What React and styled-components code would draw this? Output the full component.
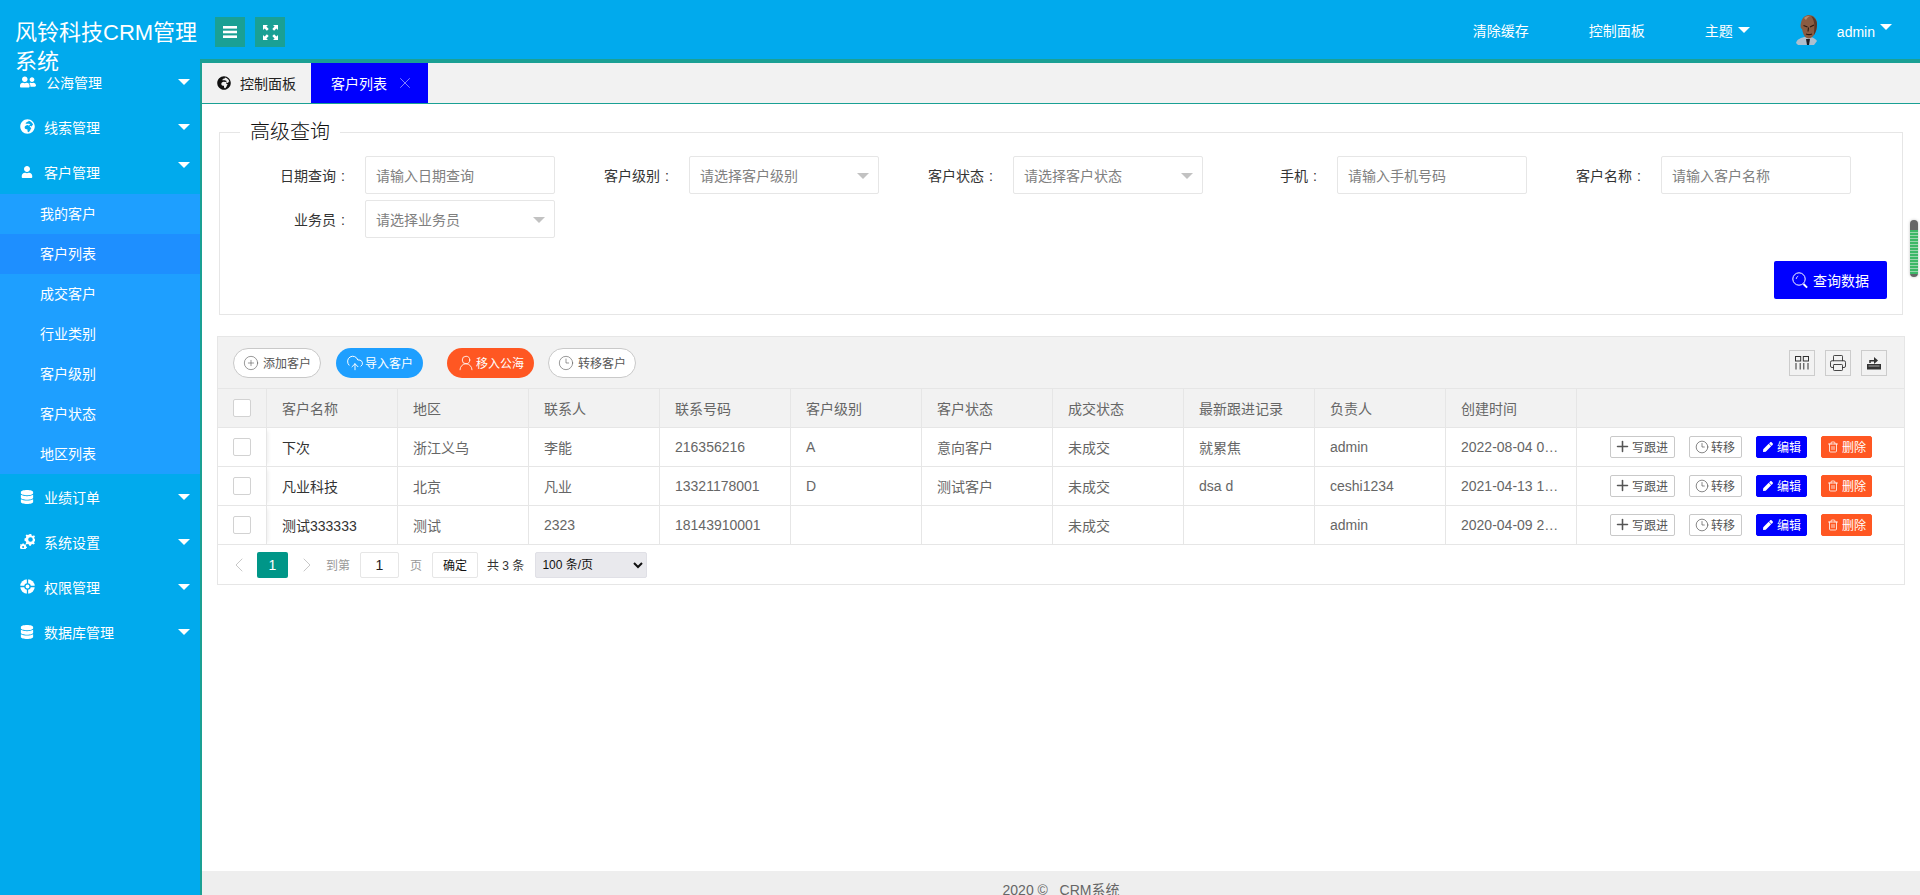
import React from 'react';
import styled, { createGlobalStyle } from 'styled-components';
import { FaUserFriends, FaGlobeAfrica, FaUser, FaDatabase, FaPen } from 'react-icons/fa';
import { CirclePlus, CloudUpload, UserRound, Clock3, Printer, Plus, Trash2, ChevronLeft, ChevronRight, X } from 'lucide-react';

const Global = createGlobalStyle`
  html, body { margin: 0; padding: 0; height: 100%; overflow: hidden; background: #fff; }
  body { font-family: "Liberation Sans", "Noto Sans CJK SC", sans-serif; font-size: 14px; color: #333; }
  * { box-sizing: border-box; }
`;

const Page = styled.div`
  position: relative;
  width: 1920px;
  height: 895px;
  overflow: hidden;
  display: flex;
  flex-direction: column;
`;
const Header = styled.header`
  flex: 0 0 59px;
  display: flex;
  align-items: flex-start;
  background: #01aaed;
  color: #fff;
`;
const Logo = styled.div`
  position: relative;
  z-index: 2;
  flex: 0 0 200px;
  padding: 18px 0 0 15px;
  font-size: 22px;
  line-height: 29px;
  height: 59px;
`;
const HeadBtn = styled.button`
  width: 30px;
  height: 30px;
  margin: 17px 10px 0 ${p => p.$first ? '15px' : '0'};
  padding: 0;
  border: 0;
  background: #1aa094;
  color: #fff;
  display: flex;
  align-items: center;
  justify-content: center;
`;
const HeadNav = styled.nav`
  margin-left: auto;
  height: 59px;
  padding: 1px 28px 0 0;
  display: flex;
  align-items: center;
`;
const NavItem = styled.div`
  display: flex;
  align-items: center;
  height: 30px;
  padding: 0 30px;
  font-size: 14px;
`;
const UserBox = styled.div`
  display: flex;
  align-items: center;
  padding-left: 16px;
  height: 58px;
`;
const UserName = styled.span`
  margin-left: 17px;
  padding-top: 4px;
  font-size: 14px;
`;
const Caret = styled.i`
  display: block;
  flex: none;
  width: 0;
  height: 0;
  margin-left: ${p => p.$ml ?? 5}px;
  border-style: solid;
  border-width: 6px 6px 0 6px;
  border-color: ${p => p.$color || '#fff'} transparent transparent transparent;
  transform: translateY(${p => p.$dy || 0}px);
`;
const MenuCaret = styled(Caret)`
  margin-left: auto;
`;
const Body = styled.div`
  flex: 1;
  display: flex;
  min-height: 0;
`;
const Sidebar = styled.aside`
  flex: 0 0 200px;
  background: #01aaed;
  color: #fff;
`;
const MenuRow = styled.div`
  height: 45px;
  display: flex;
  align-items: center;
  padding: 0 10px 0 20px;
`;
const MenuIcon = styled.span`
  flex: 0 0 ${p => p.$w || 24}px;
  padding-left: ${p => p.$pl || 0}px;
  display: flex;
  align-items: center;
`;
const SubMenu = styled.div`
  background: #1e9fff;
`;
const SubRow = styled.div`
  height: 40px;
  line-height: 40px;
  padding-left: 40px;
  background: ${p => p.$active ? '#1e8fff' : 'transparent'};
`;
const Main = styled.main`
  flex: 1;
  min-width: 0;
  display: flex;
  flex-direction: column;
  border-top: 4px solid #1aa094;
  border-left: 2px solid #1aa094;
`;
const Tabs = styled.div`
  flex: 0 0 41px;
  display: flex;
  background: #f2f2f2;
  border-bottom: 1px solid #1aa094;
`;
const Tab = styled.div`
  height: 40px;
  width: ${p => p.$w}px;
  padding-left: ${p => p.$pl}px;
  display: flex;
  align-items: center;
  font-size: 14px;
  color: ${p => p.$active ? '#fff' : '#222'};
  background: ${p => p.$active ? '#0000ff' : 'transparent'};
`;
const TabIcon = styled.span`
  display: flex;
  margin-right: 9px;
`;
const TabClose = styled.span`
  display: flex;
  margin-left: 9px;
  opacity: .75;
`;
const Content = styled.div`
  flex: 1;
  min-height: 0;
  padding: 0 15px;
`;
const Field = styled.fieldset`
  margin: 13px 2px 0;
  padding: 9px 15px 15px 35px;
  border: 1px solid #e6e6e6;
`;
const Legend = styled.legend`
  margin-left: -15px;
  padding: 0 10px;
  font-size: 20px;
  line-height: 30px;
  font-weight: 300;
  color: #111;
`;
const FormGrid = styled.div`
  display: flex;
  flex-wrap: wrap;
  row-gap: 6px;
`;
const FormItem = styled.div`
  flex: 0 0 324px;
  display: flex;
  align-items: center;
`;
const Label = styled.label`
  flex: 0 0 110px;
  padding-right: 15px;
  display: flex;
  align-items: baseline;
  justify-content: flex-end;
  color: #333;
`;
const Colon = styled.span`
  width: 14px;
  text-align: center;
`;
const Input = styled.div`
  position: relative;
  width: 190px;
  height: 38px;
  padding-left: 10px;
  display: flex;
  align-items: center;
  border: 1px solid #e6e6e6;
  border-radius: 2px;
  color: #808080;
  font-size: 14px;
`;
const SelectCaret = styled(Caret)`
  position: absolute;
  right: 9px;
  top: 16px;
`;
const FormActions = styled.div`
  display: flex;
  justify-content: flex-end;
  margin-top: 23px;
`;
const SearchBtn = styled.button`
  width: 113px;
  height: 38px;
  border: 0;
  border-radius: 2px;
  padding: 0;
  background: #0000ff;
  color: #fff;
  font: inherit;
  display: flex;
  align-items: center;
  justify-content: center;
  gap: 4px;
`;
const TableBox = styled.section`
  margin-top: 21px;
  border: 1px solid #e6e6e6;
`;
const Toolbar = styled.div`
  height: 52px;
  padding: 0 17px 0 15px;
  display: flex;
  align-items: center;
  background: #f2f2f2;
  border-bottom: 1px solid #e6e6e6;
`;
const ToolBtn = styled.button`
  height: 30px;
  padding: 0 9px;
  margin-left: ${p => p.$ml || 0}px;
  display: inline-flex;
  align-items: center;
  gap: ${p => p.$gap ?? 1}px;
  border: 1px solid ${p => p.$bg ? 'transparent' : '#c9c9c9'};
  border-radius: 15px;
  background: ${p => p.$bg || '#fff'};
  color: ${p => p.$bg ? '#fff' : '#555'};
  font: inherit;
  font-size: 12px;
`;
const ToolRight = styled.div`
  margin-left: auto;
  display: flex;
  gap: 10px;
`;
const SquareTool = styled.div`
  width: 26px;
  height: 26px;
  display: flex;
  align-items: center;
  justify-content: center;
  border: 1px solid #ccc;
  color: #333;
`;
const Grid = styled.table`
  width: 100%;
  table-layout: fixed;
  border-collapse: separate;
  border-spacing: 0;
`;
const Col = styled.col`
  width: ${p => p.$w ? `${p.$w}px` : 'auto'};
`;
const Th = styled.th`
  height: 39px;
  padding: 0 15px;
  text-align: left;
  font-weight: 400;
  font-size: 14px;
  color: #666;
  background: #f2f2f2;
  border-right: 1px solid #e6e6e6;
  border-bottom: 1px solid #e6e6e6;
  white-space: nowrap;
  overflow: hidden;
  &:last-child { border-right: 0; }
`;
const Td = styled.td`
  height: 39px;
  padding: 0 15px;
  font-size: 14px;
  color: ${p => p.$dark ? '#333' : '#666'};
  border-right: 1px solid #e6e6e6;
  border-bottom: 1px solid #e6e6e6;
  white-space: nowrap;
  overflow: hidden;
  text-overflow: ellipsis;
  &:last-child { border-right: 0; text-align: center; padding: 0; }
`;
const CheckCell = styled.div`
  display: flex;
  align-items: center;
  height: 100%;
`;
const CheckTh = styled(Th)`
  padding: 0 0 0 15px;
  box-shadow: 4px 0 4px -3px rgba(0, 0, 0, .08);
`;
const CheckTd = styled(Td)`
  padding: 0 0 0 15px;
  box-shadow: 4px 0 4px -3px rgba(0, 0, 0, .08);
`;
const Check = styled.span`
  display: block;
  width: 18px;
  height: 18px;
  background: #fff;
  border: 1px solid #d2d2d2;
  border-radius: 2px;
`;
const Ops = styled.div`
  display: inline-flex;
  align-items: center;
  gap: 14px;
  padding-left: 1px;
`;
const OpBtn = styled.button`
  height: 22px;
  padding: 0 ${p => p.$bg ? 5 : 6}px;
  display: inline-flex;
  align-items: center;
  gap: 3px;
  border: 1px solid ${p => p.$bg || '#c9c9c9'};
  border-radius: 2px;
  background: ${p => p.$bg || '#fff'};
  color: ${p => p.$bg ? '#fff' : '#555'};
  font: inherit;
  font-size: 12px;
`;
const OpIcon = styled.span`
  flex: 0 0 12px;
  width: 12px;
  min-width: 0;
  display: flex;
  align-items: center;
  justify-content: center;
  svg { flex: none; }
`;
const Pager = styled.div`
  height: 39px;
  display: flex;
  align-items: center;
  padding-left: 10px;
  font-size: 12px;
  color: #999;
`;
const PageArrow = styled.span`
  flex: 0 0 ${p => p.$w}px;
  min-width: 0;
  display: flex;
  justify-content: center;
  color: #c8c8c8;
  svg { flex: none; }
`;
const PageNum = styled.span`
  width: 31px;
  height: 26px;
  margin-left: 7px;
  display: flex;
  align-items: center;
  justify-content: center;
  background: #009688;
  color: #fff;
  border-radius: 2px;
  font-size: 14px;
`;
const PageInput = styled.span`
  width: 39px;
  height: 26px;
  margin-left: 10px;
  display: flex;
  align-items: center;
  justify-content: center;
  border: 1px solid #e6e6e6;
  border-radius: 2px;
  color: #222;
  font-size: 14px;
`;
const PageText = styled.span`
  margin-left: ${p => p.$ml || 0}px;
  color: ${p => p.$color || '#999'};
`;
const PageOk = styled.button`
  width: 46px;
  height: 26px;
  margin-left: 10px;
  padding: 0;
  background: #fff;
  border: 1px solid #e6e6e6;
  border-radius: 2px;
  font: inherit;
  color: #111;
`;
const PageSelect = styled.select`
  width: 112px;
  height: 26px;
  margin-left: 11px;
  padding: 0 2px;
  border: 1px solid #e0e0e6;
  border-radius: 2px;
  background-color: #e9e9ed;
  color: #111;
  font-family: inherit;
  font-size: 12px;
`;
const Footer = styled.footer`
  flex: 0 0 24px;
  overflow: hidden;
  background: #eee;
  color: #666;
  text-align: center;
  font-size: 14px;
  line-height: 38px;
  white-space: pre;
`;
const ScrollThumb = styled.div`
  position: absolute;
  left: 1910px;
  top: 220px;
  width: 8px;
  height: 57px;
  border-radius: 4px;
  background: repeating-linear-gradient(#3cb868 0 2px, #9ad4ad 2px 3px) 0 10px / 100% 44px no-repeat, #666;
  box-shadow: 0 0 3px rgba(0, 0, 0, .25);
`;

const Hamburger = () => (
  <svg width="14" height="12" viewBox="0 0 14 12" fill="#fff">
    <rect x="0" y="0" width="14" height="2.6" /><rect x="0" y="4.7" width="14" height="2.6" /><rect x="0" y="9.4" width="14" height="2.6" />
  </svg>
);
const FullScreen = () => (
  <svg width="15" height="15" viewBox="0 0 15 15" fill="#fff">
    <path d="M0 0h5L3.4 1.6l2.3 2.3-1.8 1.8-2.3-2.3L0 5zM15 0v5l-1.6-1.6-2.3 2.3-1.8-1.8 2.3-2.3L10 0zM0 15v-5l1.6 1.6 2.3-2.3 1.8 1.8-2.3 2.3L5 15zM15 15h-5l1.6-1.6-2.3-2.3 1.8-1.8 2.3 2.3L15 10z" />
  </svg>
);
const Avatar = () => (
  <svg width="24" height="30" viewBox="0 0 24 30">
    <path d="M0 28c1-4 5-5 8-6h7c3 1 5 2 6 4l-3 4H2z" fill="#aebfce" />
    <path d="M10 24h4l-1 6h-2z" fill="#1d1d24" />
    <path d="M5 8C6 2 10 0 13 0c5 0 8 4 8 9 0 4-1 8-3 11-2 3-5 4-7 3-3-1-4-5-5-9-1 0-2-3-1-6z" fill="#8a5c42" />
    <path d="M15 1c3 1 6 4 6 8 0 4-1 8-3 11 0-6 2-13-3-19z" fill="#5a3827" />
    <path d="M8 3c2-2 4-2 6-2-2 1-3 2-4 4z" fill="#b58c70" />
    <path d="M7.5 10.5l4 1.5M18 10l-4 2M10 19c2 .8 4 .8 6 0M12.5 12.5l-.5 4" stroke="#2a1710" strokeWidth="1.1" fill="none" />
  </svg>
);
const BallIcon = () => (
  <svg width="15" height="15" viewBox="0 0 15 15">
    <circle cx="7.5" cy="7.5" r="7.3" fill="#fff" />
    <circle cx="7.5" cy="7.5" r="2.6" fill="none" stroke="#01aaed" strokeWidth="1.3" />
    <path d="M7.5 0v5M7.5 10v5M0 7.5h5M10 7.5h5" stroke="#01aaed" strokeWidth="1.3" />
  </svg>
);
const GearsIcon = () => (
  <svg width="15" height="15" viewBox="0 0 15 15" fill="#fff">
    <path fillRule="evenodd" d="M9.7 0h1.6l.3 1.4 1.2.6 1.2-.7 1 1.2-.8 1.1.4 1.3 1.4.4v1.5l-1.4.4-.5 1.2.7 1.2-1.1 1-1.2-.7-1.2.5-.4 1.3H9.3l-.3-1.3-1.2-.5-1.2.7-1-1 .7-1.2-.6-1.2-1.2-.4V4.4l1.3-.4.5-1.3-.7-1.1 1.1-1.2 1.2.7 1.2-.6z M10.5 3.2a2.3 2.3 0 1 0 0 4.6 2.3 2.3 0 0 0 0-4.6z" />
    <path fillRule="evenodd" d="M2.5 9.5h1.3l.2.8.7.3.7-.4.8.8-.4.7.3.7.8.3v1.2l-.8.2-.3.7.4.7-.8.8-.7-.4-.7.3-.2.7H2.5l-.2-.7-.7-.3-.7.4-.8-.8.4-.7L.2 14-.5 13.7v-1.2l.7-.2.3-.8-.4-.7.8-.8.7.4.7-.3z M3.1 12a1 1 0 1 0 0 2 1 1 0 0 0 0-2z" />
  </svg>
);
const ColsIcon = () => (
  <svg width="14" height="14" viewBox="0 0 14 14" fill="none" stroke="#333" strokeWidth="1">
    <rect x=".5" y=".5" width="5.2" height="4.5" /><rect x="8.3" y=".5" width="5.2" height="4.5" />
    <path d="M1 7v6.5M5.2 7v6.5M8.8 7v6.5M13 7v6.5" />
  </svg>
);
const ExportIcon = () => (
  <svg width="14" height="14" viewBox="0 0 14 14">
    <path d="M0 8h14v5.5H0z" fill="#333" />
    <path d="M3 7V4.8h4.5" fill="none" stroke="#333" strokeWidth="1.5" />
    <path d="M7 1l4 3.5L7 8z" fill="#333" />
    <path d="M1.5 10h11" stroke="#fff" strokeWidth=".6" />
  </svg>
);
const SearchIcon = () => (
  <svg width="17" height="17" viewBox="0 0 17 17" fill="none" stroke="#fff">
    <circle cx="7" cy="7" r="6.2" strokeWidth="1" />
    <path d="M4.2 7a3 3 0 0 1 2-2.8" strokeWidth=".8" />
    <path d="M11.5 12l3.6 3.6" strokeWidth="2" />
  </svg>
);

const menuTop = [
  { name: '公海管理', icon: <FaUserFriends size={16} />, w: 26 },
  { name: '线索管理', icon: <FaGlobeAfrica size={15} /> },
];
const menuBottom = [
  { name: '业绩订单', icon: <FaDatabase size={14} /> },
  { name: '系统设置', icon: <GearsIcon /> },
  { name: '权限管理', icon: <BallIcon /> },
  { name: '数据库管理', icon: <FaDatabase size={14} /> },
];
const subMenu = ['我的客户', '客户列表', '成交客户', '行业类别', '客户级别', '客户状态', '地区列表'];
const filters = [
  { label: '日期查询', text: '请输入日期查询' },
  { label: '客户级别', text: '请选择客户级别', select: true },
  { label: '客户状态', text: '请选择客户状态', select: true },
  { label: '手机', text: '请输入手机号码' },
  { label: '客户名称', text: '请输入客户名称' },
  { label: '业务员', text: '请选择业务员', select: true },
];
const columns = ['客户名称', '地区', '联系人', '联系号码', '客户级别', '客户状态', '成交状态', '最新跟进记录', '负责人', '创建时间'];
const rows = [
  ['下次', '浙江义乌', '李能', '216356216', 'A', '意向客户', '未成交', '就累焦', 'admin', '2022-08-04 09:21:33'],
  ['凡业科技', '北京', '凡业', '13321178001', 'D', '测试客户', '未成交', 'dsa d', 'ceshi1234', '2021-04-13 15:12:08'],
  ['测试333333', '测试', '2323', '18143910001', '', '', '未成交', '', 'admin', '2020-04-09 20:45:10'],
];

const MenuItem = ({ item, dy }) => (
  <MenuRow>
    <MenuIcon $w={item.w} $pl={item.pl}>{item.icon}</MenuIcon>
    {item.name}
    <MenuCaret $dy={dy} />
  </MenuRow>
);

export default function App() {
  return (
    <Page>
      <Global />
      <Header>
        <Logo>风铃科技CRM管理系统</Logo>
        <HeadBtn $first><Hamburger /></HeadBtn>
        <HeadBtn><FullScreen /></HeadBtn>
        <HeadNav>
          <NavItem>清除缓存</NavItem>
          <NavItem>控制面板</NavItem>
          <NavItem>主题<Caret /></NavItem>
          <UserBox>
            <Avatar />
            <UserName>admin</UserName>
            <Caret $dy={-3} />
          </UserBox>
        </HeadNav>
      </Header>
      <Body>
        <Sidebar>
          {menuTop.map(m => <MenuItem key={m.name} item={m} />)}
          <MenuItem item={{ name: '客户管理', pl: 1, icon: <FaUser size={12} /> }} dy={-7} />
          <SubMenu>
            {subMenu.map(s => <SubRow key={s} $active={s === '客户列表'}>{s}</SubRow>)}
          </SubMenu>
          {menuBottom.map(m => <MenuItem key={m.name} item={m} />)}
        </Sidebar>
        <Main>
          <Tabs>
            <Tab $w={109} $pl={15}>
              <TabIcon><FaGlobeAfrica size={14} color="#111" /></TabIcon>控制面板
            </Tab>
            <Tab $w={117} $pl={20} $active>
              客户列表<TabClose><X size={18} strokeWidth={0.9} /></TabClose>
            </Tab>
          </Tabs>
          <Content>
            <Field>
              <Legend>高级查询</Legend>
              <FormGrid>
                {filters.map(f => (
                  <FormItem key={f.label}>
                    <Label>{f.label}<Colon>:</Colon></Label>
                    <Input>
                      {f.text}
                      {f.select && <SelectCaret $color="#c2c2c2" $ml={0} />}
                    </Input>
                  </FormItem>
                ))}
              </FormGrid>
              <FormActions>
                <SearchBtn><SearchIcon />查询数据</SearchBtn>
              </FormActions>
            </Field>
            <TableBox>
              <Toolbar>
                <ToolBtn $gap={4}><CirclePlus size={16} strokeWidth={0.9} />添加客户</ToolBtn>
                <ToolBtn $bg="#1e9fff" $ml={15}><CloudUpload size={18} strokeWidth={1.3} />导入客户</ToolBtn>
                <ToolBtn $bg="#ff5722" $ml={24}><UserRound size={18} strokeWidth={1.1} />移入公海</ToolBtn>
                <ToolBtn $ml={14} $gap={4}><Clock3 size={16} strokeWidth={0.9} />转移客户</ToolBtn>
                <ToolRight>
                  <SquareTool><ColsIcon /></SquareTool>
                  <SquareTool><Printer size={18} strokeWidth={1.2} /></SquareTool>
                  <SquareTool><ExportIcon /></SquareTool>
                </ToolRight>
              </Toolbar>
              <Grid>
                <colgroup>
                  <Col $w={49} />
                  {columns.map(c => <Col key={c} $w={131} />)}
                  <Col />
                </colgroup>
                <thead>
                  <tr>
                    <CheckTh><CheckCell><Check /></CheckCell></CheckTh>
                    {columns.map(c => <Th key={c}>{c}</Th>)}
                    <Th />
                  </tr>
                </thead>
                <tbody>
                  {rows.map(r => (
                    <tr key={r[0]}>
                      <CheckTd><CheckCell><Check /></CheckCell></CheckTd>
                      {r.map((v, i) => <Td key={i} $dark={i === 0}>{v}</Td>)}
                      <Td>
                        <Ops>
                          <OpBtn><OpIcon><Plus size={17} strokeWidth={2.2} /></OpIcon>写跟进</OpBtn>
                          <OpBtn><OpIcon><Clock3 size={14} strokeWidth={1.2} /></OpIcon>转移</OpBtn>
                          <OpBtn $bg="#0000ff"><OpIcon><FaPen size={10} /></OpIcon>编辑</OpBtn>
                          <OpBtn $bg="#ff5722"><OpIcon><Trash2 size={12} strokeWidth={1.6} /></OpIcon>删除</OpBtn>
                        </Ops>
                      </Td>
                    </tr>
                  ))}
                </tbody>
              </Grid>
              <Pager>
                <PageArrow $w={22}><ChevronLeft size={24} strokeWidth={1} /></PageArrow>
                <PageNum>1</PageNum>
                <PageArrow $w={38}><ChevronRight size={24} strokeWidth={1} /></PageArrow>
                <PageText>到第</PageText>
                <PageInput>1</PageInput>
                <PageText $ml={11}>页</PageText>
                <PageOk>确定</PageOk>
                <PageText $ml={9} $color="#333">共 3 条</PageText>
                <PageSelect defaultValue="100">
                  <option value="100">100 条/页</option>
                </PageSelect>
              </Pager>
            </TableBox>
          </Content>
          <Footer>{'2020 ©   CRM系统'}</Footer>
        </Main>
      </Body>
      <ScrollThumb />
    </Page>
  );
}
